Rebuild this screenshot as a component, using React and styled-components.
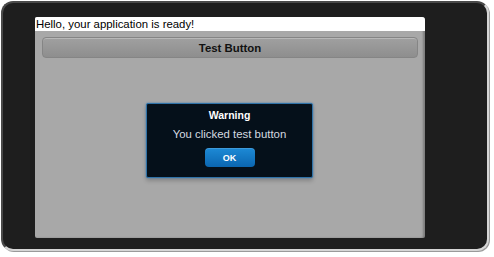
import React from "react";
import styled, { createGlobalStyle } from "styled-components";

//---------------GLOBAL----------------
const Global = createGlobalStyle`
  html, body { margin: 0; padding: 0; background: #fff; }
  body { font-family: "Liberation Sans", Arial, sans-serif; }
`;

//------------STYLED-COMPONENTS-----------
const Page = styled.div`
  width: 494px;
  height: 257px;
  padding: 1px 0 0 1px;
  box-sizing: border-box;
`;

const Device = styled.div`
  width: 488px;
  height: 250px;
  box-sizing: border-box;
  background: #1e1e1e;
  border-radius: 12px;
  border: 2px solid #d6d6d6;
  border-top-color: #4a4a4a;
  border-left-color: #4a4a4a;
  box-shadow: 1px 1px 0 #9a9a9a;
  padding: 14px 62px 11px 32px;
  display: flex;
`;

const Screen = styled.div`
  position: relative;
  flex: 1;
  background: #a8a8a8;
  border-radius: 2px 3px 2px 2px;
  box-shadow: inset -2px 0 2px rgba(0, 0, 0, 0.25);
  display: flex;
  flex-direction: column;
  overflow: hidden;
`;

const Header = styled.div`
  background: #fff;
  height: 14px;
  line-height: 14px;
  font-size: 11.4px;
  color: #000;
  padding-left: 1px;
  white-space: nowrap;
`;

const TestButton = styled.button`
  margin: 6px 7px 0 7px;
  height: 21px;
  border-radius: 4px;
  border: 1px solid #858585;
  background: linear-gradient(#a0a0a0, #8e8e8e);
  box-shadow: inset 0 1px 0 rgba(255, 255, 255, 0.25);
  font-family: "Liberation Sans", Arial, sans-serif;
  font-weight: bold;
  font-size: 11.4px;
  color: #111;
  padding: 0;
`;

const Dialog = styled.div`
  position: absolute;
  left: 111px;
  top: 86px;
  width: 167px;
  height: 75px;
  box-sizing: border-box;
  background: #05101a;
  border: 1px solid #2f72a8;
  box-shadow: 0 0 2px #3b7fb8, 0 3px 4px rgba(0, 0, 0, 0.2);
  border-radius: 2px;
  display: flex;
  flex-direction: column;
  align-items: center;
  padding-top: 5px;
`;

const Title = styled.div`
  color: #fff;
  font-weight: bold;
  font-size: 10.5px;
  line-height: 13px;
`;

const Message = styled.div`
  color: #d4dae0;
  font-size: 11.4px;
  line-height: 14px;
  margin-top: 5px;
`;

const OkButton = styled.button`
  margin-top: 7px;
  width: 50px;
  height: 19px;
  border: none;
  border-radius: 4px;
  background: linear-gradient(#1d8ad6, #0b66b0);
  box-shadow: inset 0 1px 0 rgba(255, 255, 255, 0.15);
  color: #fff;
  font-family: "Liberation Sans", Arial, sans-serif;
  font-weight: bold;
  font-size: 9px;
  padding: 0;
`;
//----------END_STYLED-COMPONENTS-----------

//---------------COMPONENT---------------
const App = () => {
  return (
    <>
      <Global />
      <Page>
        <Device>
          <Screen>
            <Header>Hello, your application is ready!</Header>
            <TestButton>Test Button</TestButton>
            <Dialog>
              <Title>Warning</Title>
              <Message>You clicked test button</Message>
              <OkButton>OK</OkButton>
            </Dialog>
          </Screen>
        </Device>
      </Page>
    </>
  );
};
//-------------END_COMPONENT---------------
export default App;
